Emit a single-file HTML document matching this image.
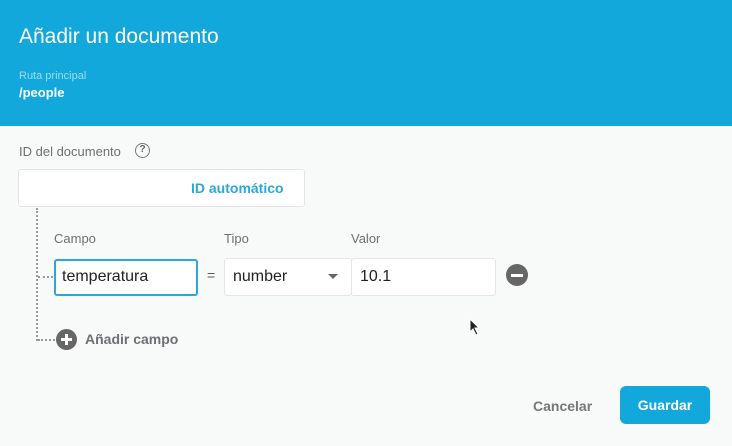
<!DOCTYPE html>
<html><head><meta charset="utf-8"><style>
*{box-sizing:border-box;margin:0;padding:0}
body{width:732px;height:446px;overflow:hidden;background:#f8f9f9;font-family:"Liberation Sans",sans-serif;position:relative}
.hdr{position:absolute;left:0;top:0;width:732px;height:126px;background:#12a8db}
.a{position:absolute;white-space:nowrap}
.box{position:absolute;background:#fff;border:1px solid #e3e5e6;border-radius:3px}
</style></head><body>
<div class="hdr"></div>
<div class="a" style="left:19px;top:25px;font-size:21px;color:#fff">Añadir un documento</div>
<div class="a" style="left:19px;top:70px;font-size:11px;color:#9fdcf2">Ruta principal</div>
<div class="a" style="left:19px;top:85px;font-size:13px;color:#fff;font-weight:bold">/people</div>
<div class="a" style="left:19px;top:144px;font-size:13px;color:#6c7073">ID del documento</div>
<div class="a" style="left:135px;top:143px;width:15px;height:15px;border:1.5px solid #777;border-radius:50%;font-size:10px;color:#666;text-align:center;line-height:12px;font-weight:bold">?</div>
<div class="box" style="left:18px;top:169px;width:287px;height:38px"></div>
<div class="a" style="left:191px;top:180px;font-size:14px;color:#2aa7dc;font-weight:bold">ID automático</div>
<div class="a" style="left:36px;top:208px;height:133px;border-left:2px dotted #999"></div>
<div class="a" style="left:38px;top:276px;width:15px;border-top:2px dotted #999"></div>
<div class="a" style="left:38px;top:339px;width:17px;border-top:2px dotted #999"></div>
<div class="a" style="left:54px;top:231px;font-size:13px;color:#6c7073">Campo</div>
<div class="a" style="left:224px;top:231px;font-size:13px;color:#6c7073">Tipo</div>
<div class="a" style="left:351px;top:231px;font-size:13px;color:#6c7073">Valor</div>
<div class="box" style="left:54px;top:259px;width:144px;height:37px;border:2px solid #2aa7dc"></div>
<div class="a" style="left:62px;top:268px;font-size:16px;color:#222">temperatura</div>
<div class="a" style="left:207px;top:267px;font-size:14px;color:#555">=</div>
<div class="box" style="left:224px;top:258px;width:128px;height:38px"></div>
<div class="a" style="left:233px;top:268px;font-size:16px;color:#222">number</div>
<div class="a" style="left:328px;top:274px;border-left:5px solid transparent;border-right:5px solid transparent;border-top:5px solid #666"></div>
<div class="box" style="left:351px;top:258px;width:145px;height:38px"></div>
<div class="a" style="left:360px;top:268px;font-size:16px;color:#222">10.1</div>
<div class="a" style="left:506px;top:264px;width:22px;height:22px;border-radius:50%;background:#666"></div>
<div class="a" style="left:511px;top:274px;width:12px;height:2.5px;background:#fff"></div>
<div class="a" style="left:56px;top:329px;width:21px;height:21px;border-radius:50%;background:#666"></div>
<div class="a" style="left:61px;top:338px;width:11px;height:3px;background:#fff"></div>
<div class="a" style="left:65px;top:334px;width:3px;height:11px;background:#fff"></div>
<div class="a" style="left:85px;top:331px;font-size:14px;color:#6c7073;font-weight:bold">Añadir campo</div>
<svg class="a" style="left:469px;top:318px" width="12" height="18"><path d="M1 1 L1 14 L4 11 L7 17 L9 16 L6 10 L10 10 Z" fill="#222" stroke="#fff" stroke-width="1"/></svg>
<div class="a" style="left:533px;top:398px;font-size:14px;color:#777;font-weight:bold">Cancelar</div>
<div class="a" style="left:620px;top:386px;width:90px;height:38px;background:#12a8db;border-radius:6px;color:#fff;font-size:14px;font-weight:bold;text-align:center;line-height:38px">Guardar</div>
</body></html>
